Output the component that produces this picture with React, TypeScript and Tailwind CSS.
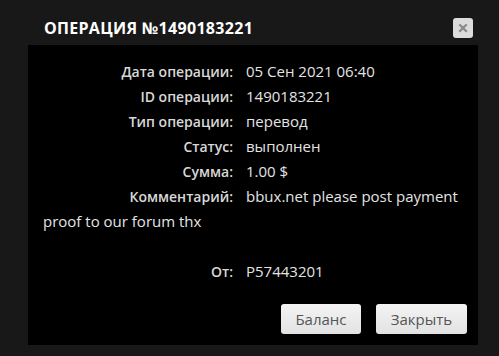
export default function App() {
  const rows = [
    { label: 'Дата операции:', value: '05 Сен 2021 06:40' },
    { label: 'ID операции:', value: '1490183221' },
    { label: 'Тип операции:', value: 'перевод' },
    { label: 'Статус:', value: 'выполнен' },
    { label: 'Сумма:', value: '1.00 $' },
    { label: 'Комментарий:', value: 'bbux.net please post payment' },
  ]

  return (
    <div className="w-[499px] h-[356px] bg-[#181818] overflow-hidden" style={{ fontFamily: '"Open Sans", "Liberation Sans", sans-serif' }}>
      <div className="flex items-center justify-between pl-[44px] pr-[26px] pt-[16px] h-[45px] pb-[6px]">
        <h1 className="text-[16px] font-bold text-white tracking-[0.3px] uppercase leading-none">
          Операция №1490183221
        </h1>
        <button className="w-[20px] h-[20px] rounded-[3px] bg-[#dcdcdc] flex items-center justify-center text-[#8a8a8a] text-[20px] font-bold leading-none">
          ×
        </button>
      </div>

      <div className="ml-[28px] w-[450px] h-[300px] bg-black px-[15px] pt-[14px] text-[15px] leading-[25px] text-[#e4e4e4]">
        {rows.map((r) => (
          <div key={r.label} className="flex items-baseline">
            <span className="w-[190px] shrink-0 text-right text-[14px] font-semibold text-[#d8d8d8]">{r.label}</span>
            <span className="ml-[13px] whitespace-nowrap">{r.value}</span>
          </div>
        ))}
        <div>proof to our forum thx</div>
        <div className="h-[25px]" />
        <div className="flex items-baseline">
          <span className="w-[190px] shrink-0 text-right text-[14px] font-semibold text-[#d8d8d8]">От:</span>
          <span className="ml-[13px]">P57443201</span>
        </div>

        <div className="flex justify-end gap-[15px] mt-[20px] mr-[-4px]">
          <button className="w-[80px] h-[30px] rounded-[3px] bg-gradient-to-b from-[#f4f4f4] to-[#e2e2e2] text-[#555] text-[15px]">
            Баланс
          </button>
          <button className="w-[91px] h-[30px] rounded-[3px] bg-gradient-to-b from-[#f4f4f4] to-[#e2e2e2] text-[#555] text-[15px]">
            Закрыть
          </button>
        </div>
      </div>
    </div>
  )
}
